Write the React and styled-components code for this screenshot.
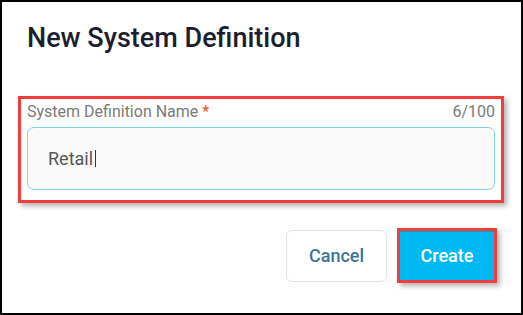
import React from 'react'
import styled, { createGlobalStyle } from 'styled-components'

const GlobalStyle = createGlobalStyle`
    html, body {
        margin: 0;
        padding: 0;
        background: #ffffff;
        font-family: Roboto, 'Noto Sans', sans-serif;
    }
`

const App = () => {
    return (
        <>
            <GlobalStyle />
            <Frame>
                <Title>New System Definition</Title>
                <Highlight>
                    <LabelRow>
                        <Label>
                            System Definition Name <Required>*</Required>
                        </Label>
                        <Counter>6/100</Counter>
                    </LabelRow>
                    <InputBox>
                        Retail<Caret />
                    </InputBox>
                </Highlight>
                <Footer>
                    <CancelButton>Cancel</CancelButton>
                    <CreateButton>Create</CreateButton>
                </Footer>
            </Frame>
        </>
    )
}

export default App

const Frame = styled.div`
    width: 523px;
    height: 315px;
    box-sizing: border-box;
    border: 2px solid #000000;
    background: #ffffff;
    display: flex;
    flex-direction: column;
    padding: 20px 0 0 0;
`

const Title = styled.h2`
    margin: 0 0 42px 0;
    padding-left: 25px;
    font-size: 27px;
    line-height: 32px;
    font-weight: 500;
    color: #1c1d30;
`

const Highlight = styled.div`
    margin: 0 17px 0 16px;
    border: 3px solid #f23d3d;
    padding: 3px 6px 10px 6px;
    box-shadow: 3px 3px 5px rgba(0, 0, 0, 0.3);
    display: flex;
    flex-direction: column;
    gap: 6px;
`

const LabelRow = styled.div`
    display: flex;
    justify-content: space-between;
    align-items: center;
    font-size: 16px;
    line-height: 19px;
    color: #7a7a7a;
`

const Label = styled.span``

const Required = styled.span`
    color: #f4511e;
`

const Counter = styled.span``

const InputBox = styled.div`
    height: 63px;
    box-sizing: border-box;
    border: 1.5px solid #7fd4f2;
    border-radius: 7px;
    background: #fafafa;
    display: flex;
    align-items: center;
    padding-left: 20px;
    font-size: 18px;
    color: #555555;
`

const Caret = styled.span`
    display: inline-block;
    width: 1px;
    height: 17px;
    background: #333333;
    margin-left: 2px;
`

const Footer = styled.div`
    display: flex;
    justify-content: flex-end;
    align-items: center;
    gap: 10px;
    padding: 25px 24px 0 0;
`

const CancelButton = styled.button`
    width: 101px;
    height: 52px;
    border: 1px solid #dfe6ea;
    border-radius: 6px;
    background: #ffffff;
    color: #3d7499;
    font-family: Roboto, sans-serif;
    font-size: 18px;
    font-weight: 500;
    cursor: pointer;
`

const CreateButton = styled.button`
    width: 100px;
    height: 55px;
    box-sizing: border-box;
    border: 3px solid #f23d3d;
    background: #00b9f3;
    box-shadow: inset 0 1px 0 #0a9fd0, 3px 3px 5px rgba(0, 0, 0, 0.3);
    color: #ffffff;
    font-family: Roboto, sans-serif;
    font-size: 18px;
    font-weight: 500;
    cursor: pointer;
`
